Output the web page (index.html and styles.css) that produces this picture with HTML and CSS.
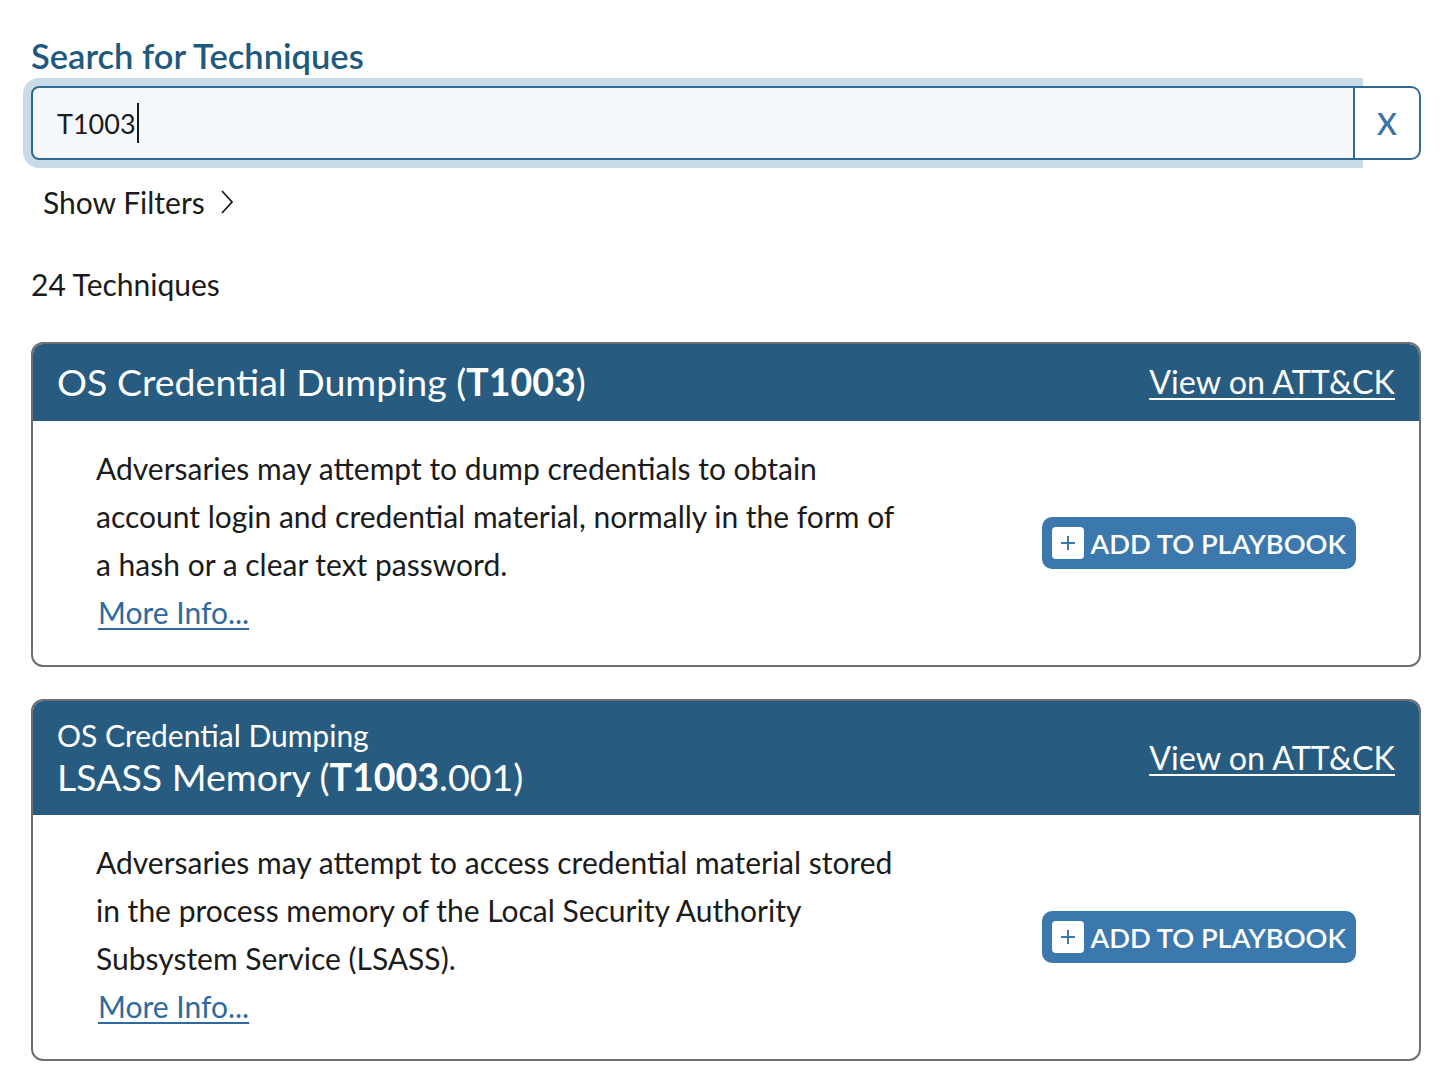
FILE: index.html
```html
<!DOCTYPE html>
<html lang="en">
<head>
<meta charset="utf-8">
<title>Search for Techniques</title>
<link rel="stylesheet" href="styles.css">
</head>
<body>
<main class="page">
  <label class="search-label" for="q">Search for Techniques</label>
  <div class="search-row">
    <div class="search-field"><span class="search-value">T1003</span><span class="caret"></span></div>
    <button class="clear-btn" type="button">X</button>
  </div>
  <button class="filters-toggle" type="button">Show Filters <svg class="chev" width="16" height="26" viewBox="0 0 16 26"><path d="M3 2 L13 13 L3 24" fill="none" stroke="#1b1b1b" stroke-width="1.8"/></svg></button>
  <p class="count">24 Techniques</p>

  <section class="card">
    <header class="card-head">
      <div class="titles">
        <h2 class="title">OS Credential Dumping (<b>T1003</b>)</h2>
      </div>
      <a class="attck" href="#">View on ATT&amp;CK</a>
    </header>
    <div class="card-body">
      <div class="desc">
        <p>Adversaries may attempt to dump credentials to obtain<br>account login and credential material, normally in the form of<br>a hash or a clear text password.</p>
        <a class="more" href="#">More Info...</a>
      </div>
      <button class="add-btn" type="button"><span class="plus"><svg width="20" height="20" viewBox="0 0 20 20"><path d="M10 3 V17 M3 10 H17" stroke="#3a78ad" stroke-width="2"/></svg></span>ADD TO PLAYBOOK</button>
    </div>
  </section>

  <section class="card">
    <header class="card-head card-head--sub">
      <div class="titles">
        <div class="parent">OS Credential Dumping</div>
        <h2 class="title">LSASS Memory (<b>T1003</b>.001)</h2>
      </div>
      <a class="attck" href="#">View on ATT&amp;CK</a>
    </header>
    <div class="card-body">
      <div class="desc">
        <p>Adversaries may attempt to access credential material stored<br>in the process memory of the Local Security Authority<br>Subsystem Service (LSASS).</p>
        <a class="more" href="#">More Info...</a>
      </div>
      <button class="add-btn" type="button"><span class="plus"><svg width="20" height="20" viewBox="0 0 20 20"><path d="M10 3 V17 M3 10 H17" stroke="#3a78ad" stroke-width="2"/></svg></span>ADD TO PLAYBOOK</button>
    </div>
  </section>
</main>
</body>
</html>
```

FILE: styles.css
```css
* { box-sizing: border-box; }
html, body { margin: 0; padding: 0; background: #ffffff; }
body {
  font-family: "Lato", "Open Sans", "Liberation Sans", sans-serif;
  color: #1b1b1b;
}
.page {
  padding: 36px 35px 20px 31px;
}
.search-label {
  display: block;
  font-size: 34.5px;
  line-height: 40px;
  font-weight: 600;
  color: #1f5a7e;
  margin-bottom: 10px;
}
.search-row {
  display: flex;
  height: 74px;
}
.search-field {
  flex: 1;
  display: flex;
  align-items: center;
  padding-left: 24px;
  background: #f5f9fc;
  border: 2px solid #2f6a96;
  border-radius: 8px 0 0 8px;
  box-shadow: 0 0 0 8px #c8dbe9;
  font-size: 27px;
  color: #1b1b1b;
}
.caret {
  display: inline-block;
  width: 2px;
  height: 40px;
  background: #1b1b1b;
  margin-left: 1px;
}
.clear-btn {
  width: 66px;
  border: 2px solid #2f6a96;
  border-left: none;
  border-radius: 0 10px 10px 0;
  background: #ffffff;
  color: #3a72a6;
  font-family: inherit;
  font-size: 30px;
  font-weight: 600;
  padding: 0;
}
.filters-toggle {
  display: flex;
  align-items: center;
  gap: 14px;
  margin: 22px 0 0 12px;
  padding: 0;
  border: none;
  background: none;
  font-family: inherit;
  font-size: 30px;
  line-height: 40px;
  color: #1b1b1b;
}
.count {
  margin: 42px 0 38px 0;
  font-size: 30px;
  line-height: 40px;
}
.card {
  border: 2px solid #707070;
  border-radius: 12px;
  overflow: hidden;
  margin-bottom: 32px;
}
.card-head {
  display: flex;
  align-items: center;
  justify-content: space-between;
  background: #275b80;
  color: #ffffff;
  padding: 16px 24px 17px 24px;
}
.card-head--sub {
  padding-top: 15px;
  padding-bottom: 16px;
}
.title {
  margin: 0;
  font-size: 37.5px;
  line-height: 44px;
  font-weight: 400;
}
.title b { font-weight: 700; }
.parent {
  font-size: 30px;
  line-height: 38px;
  margin-bottom: 1px;
}
.attck {
  color: #ffffff;
  font-size: 32.3px;
  line-height: 44px;
  text-decoration: underline;
  text-underline-offset: 4px;
  text-decoration-thickness: 2px;
}
.card-body {
  display: flex;
  align-items: center;
  justify-content: space-between;
  padding: 23px 63px 33px 63px;
}
.desc {
  width: 880px;
}
.desc p {
  margin: 0;
  font-size: 30px;
  line-height: 48px;
  white-space: nowrap;
}
.more {
  display: inline-block;
  margin-top: 4px;
  margin-left: 2px;
  font-size: 30px;
  line-height: 40px;
  color: #2e6aa0;
  text-decoration: underline;
  text-underline-offset: 4px;
  text-decoration-thickness: 2px;
}
.add-btn {
  display: flex;
  align-items: center;
  gap: 6px;
  height: 52px;
  margin-top: 10px;
  padding: 0 10px 0 10px;
  background: #3a78ad;
  color: #ffffff;
  border: none;
  border-radius: 10px;
  font-family: inherit;
  font-size: 27.3px;
  font-weight: 600;
}
.plus {
  display: flex;
  align-items: center;
  justify-content: center;
  width: 32px;
  height: 32px;
  background: #ffffff;
  border-radius: 4px;
}
```
